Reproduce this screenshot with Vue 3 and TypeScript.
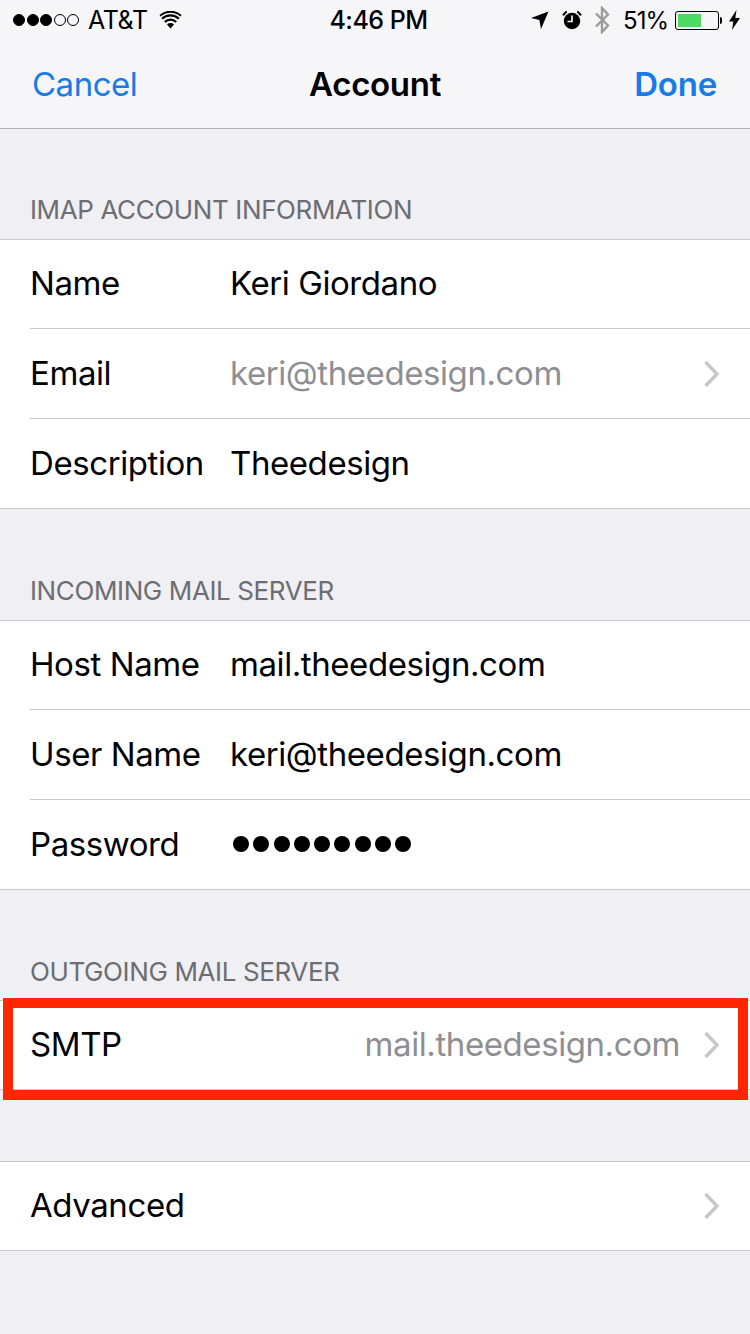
<script setup lang="ts">
interface Row {
  label: string
  value?: string
  muted?: boolean
  chevron?: boolean
  secret?: number
  alignEnd?: boolean
}

interface Section {
  id: string
  title?: string
  rows: Row[]
}

const sections: Section[] = [
  {
    id: 'imap',
    title: 'IMAP ACCOUNT INFORMATION',
    rows: [
      { label: 'Name', value: 'Keri Giordano' },
      { label: 'Email', value: 'keri@theedesign.com', muted: true, chevron: true },
      { label: 'Description', value: 'Theedesign' },
    ],
  },
  {
    id: 'incoming',
    title: 'INCOMING MAIL SERVER',
    rows: [
      { label: 'Host Name', value: 'mail.theedesign.com' },
      { label: 'User Name', value: 'keri@theedesign.com' },
      { label: 'Password', secret: 9 },
    ],
  },
  {
    id: 'outgoing',
    title: 'OUTGOING MAIL SERVER',
    rows: [
      { label: 'SMTP', value: 'mail.theedesign.com', muted: true, chevron: true, alignEnd: true },
    ],
  },
  {
    id: 'advanced',
    rows: [{ label: 'Advanced', chevron: true }],
  },
]
</script>

<template>
  <div class="screen">
    <header class="top">
      <div class="status">
        <div class="status-left">
          <span class="signal">
            <i v-for="n in 3" :key="n" class="on"></i>
            <i v-for="n in 2" :key="n" class="off"></i>
          </span>
          <span class="carrier">AT&amp;T</span>
          <svg class="wifi" width="25" height="18" viewBox="0 0 25 20">
            <path d="M12.500 19.500 8.600 15a5.600 5.600 0 0 1 7.800 0Z" fill="#000" />
            <path d="M6.200 12.200a9 9 0 0 1 12.600 0" fill="none" stroke="#000" stroke-width="2.600" />
            <path d="M3.200 8.600a13.400 13.400 0 0 1 18.600 0" fill="none" stroke="#000" stroke-width="2.400" />
            <path d="M.9 5.200a17.400 17.400 0 0 1 23.200 0" fill="none" stroke="#000" stroke-width="2.200" />
          </svg>
        </div>
        <div class="time">4:46 PM</div>
        <div class="status-right">
          <svg width="18" height="20" viewBox="0 0 18 20">
            <path d="M17.500 1.500 10 19l-1.600-9L0 8Z" fill="#000" />
          </svg>
          <svg class="alarm" width="20" height="20" viewBox="0 0 20 20">
            <circle cx="10" cy="11" r="8.200" fill="#000" />
            <path d="M1 5.200 4.600 1.400M19 5.200l-3.600-3.800" stroke="#000" stroke-width="2" fill="none" />
            <path d="M10 5.500V11.500H5.500" stroke="#f6f6f9" stroke-width="1.700" fill="none" />
          </svg>
          <svg class="bt" width="16" height="28" viewBox="0 0 16 28">
            <path d="M2 7.500 14 19.500 8 26V2l6 6.500L2 20.500" fill="none" stroke="#9b9b9b" stroke-width="2.400" />
          </svg>
          <span class="percent">51%</span>
          <span class="battery"><span class="level"></span></span>
          <span class="nub"></span>
          <svg class="bolt" width="11" height="20" viewBox="0 0 11 20">
            <path d="M7.500 0 0 11.500h4.300L3 20l8-12H6.300Z" fill="#000" />
          </svg>
        </div>
      </div>
      <nav class="nav">
        <a class="cancel">Cancel</a>
        <h1 class="title">Account</h1>
        <a class="done">Done</a>
      </nav>
    </header>

    <section v-for="section in sections" :key="section.id" class="section" :class="section.id">
      <h2 v-if="section.title" class="section-title">{{ section.title }}</h2>
      <div class="group">
        <div v-for="row in section.rows" :key="row.label" class="row">
          <span class="label">{{ row.label }}</span>
          <span
            v-if="row.value"
            class="value"
            :class="{ muted: row.muted, end: row.alignEnd }"
          >{{ row.value }}</span>
          <span v-if="row.secret" class="dots">
            <i v-for="n in row.secret" :key="n"></i>
          </span>
          <svg v-if="row.chevron" class="chevron" width="18" height="28" viewBox="0 0 18 28">
            <path d="M2.500 2 14 14 2.500 26" fill="none" stroke="#c7c7cc" stroke-width="3.400" />
          </svg>
        </div>
      </div>
    </section>

    <div class="highlight"></div>
  </div>
</template>

<style>
html,
body {
  background: #efeff4;
}
</style>

<style scoped>
.screen {
  position: relative;
  width: 750px;
  height: 1334px;
  overflow: hidden;
  background: #efeff4;
  font-family: Inter, "Liberation Sans", sans-serif;
  color: #000;
}

.top {
  height: 129px;
  box-sizing: border-box;
  background: #f6f6f9;
  border-bottom: 1px solid #b2b2b6;
}

.status {
  display: grid;
  grid-template-columns: 1fr auto 1fr;
  align-items: center;
  height: 40px;
  padding: 0 10px 0 13px;
  font-size: 25px;
}

.status-left,
.status-right {
  display: flex;
  align-items: center;
}

.status-right {
  justify-content: flex-end;
}

.signal {
  display: flex;
  gap: 1.500px;
  margin-right: 9px;
}

.signal i {
  width: 12px;
  height: 12px;
  border-radius: 50%;
  box-sizing: border-box;
  border: 1px solid #000;
}

.signal .on {
  background: #000;
}

.carrier {
  letter-spacing: -0.4px;
}

.wifi {
  margin-left: 10px;
}

.time {
  font-weight: 500;
  letter-spacing: -0.5px;
  margin-left: 4px;
}

.alarm {
  margin-left: 13px;
}

.bt {
  margin-left: 12px;
}

.percent {
  margin-left: 13px;
  font-size: 24px;
  letter-spacing: -1px;
}

.battery {
  display: block;
  width: 44px;
  height: 19px;
  box-sizing: border-box;
  margin-left: 7px;
  padding: 2px;
  border: 1px solid #000;
  border-radius: 3px;
}

.level {
  display: block;
  width: 23px;
  height: 100%;
  background: #4cd964;
}

.nub {
  width: 2px;
  height: 7px;
  margin-left: 1px;
  background: #000;
  border-radius: 0 2px 2px 0;
}

.bolt {
  margin-left: 7px;
}

.nav {
  display: grid;
  grid-template-columns: 1fr auto 1fr;
  align-items: center;
  height: 88px;
  padding: 0 33px;
  font-size: 33px;
}

.title {
  margin: 0;
  font-size: 33px;
  font-weight: 600;
  letter-spacing: -0.3px;
}

.cancel {
  color: #1a7be6;
  letter-spacing: -0.5px;
  margin-left: -1px;
}

.done {
  justify-self: end;
  color: #1a7be6;
  font-weight: 600;
  letter-spacing: -0.2px;
}

.section-title {
  display: flex;
  align-items: flex-end;
  box-sizing: border-box;
  height: 110px;
  margin: 0;
  padding: 0 30px 14px;
  font-size: 26px;
  font-weight: 400;
  letter-spacing: -0.38px;
  color: #6d6d72;
}

.incoming .section-title {
  height: 111px;
}

.outgoing .section-title {
  padding-bottom: 13px;
}

.advanced {
  margin-top: 71px;
}

.group {
  background: #fff;
  border-top: 1px solid #c8c7cc;
}

.row {
  display: flex;
  align-items: center;
  position: relative;
  box-sizing: border-box;
  height: 90px;
  padding: 0 29px 3px 30px;
  font-size: 33px;
  letter-spacing: -0.42px;
}

.row:first-child {
  height: 89px;
}

.row::after {
  content: "";
  position: absolute;
  left: 30px;
  right: 0;
  bottom: 0;
  height: 1px;
  background: #c8c7cc;
}

.row:last-child::after {
  left: 0;
}

.label {
  width: 200px;
  flex: none;
}

.value {
  flex: 1;
}

.value.muted {
  color: #8e8e93;
}

.value.end {
  text-align: right;
}

.dots {
  display: flex;
  gap: 4.300px;
  flex: 1;
  margin-left: 3px;
}

.dots i {
  width: 16px;
  height: 16px;
  border-radius: 50%;
  background: #000;
}

.chevron {
  flex: none;
  margin-left: auto;
  position: relative;
  top: 1px;
}

.value + .chevron {
  margin-left: 23px;
}

.highlight {
  position: absolute;
  left: 3px;
  top: 998px;
  width: 745px;
  height: 102px;
  box-sizing: border-box;
  border: 10px solid #ff2600;
}
</style>
